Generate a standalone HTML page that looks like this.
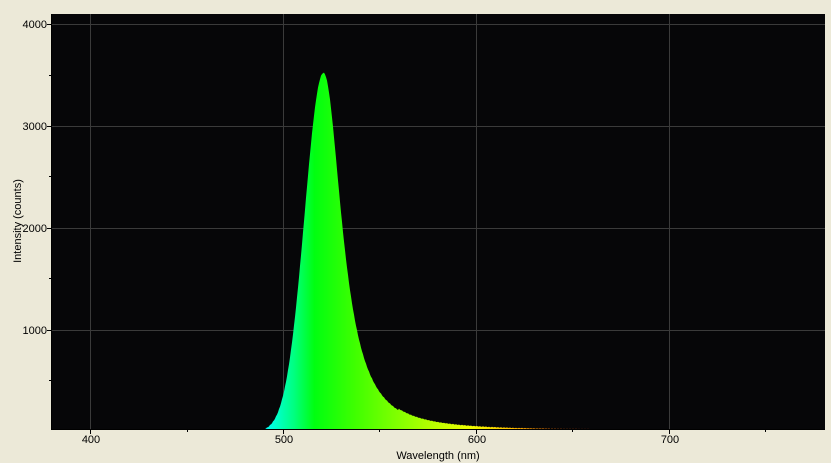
<!DOCTYPE html>
<html><head><style>
body{margin:0;width:831px;height:463px;background:#ece9d8;overflow:hidden;font-family:"Liberation Sans",sans-serif;}
svg{position:absolute;left:0;top:0}
text{font-family:"Liberation Sans",sans-serif;font-size:11px;fill:#000}
</style></head><body>
<svg width="831" height="463" id="s">
<defs>
<linearGradient id="g" gradientUnits="userSpaceOnUse" x1="186" x2="700" y1="0" y2="0">
<stop offset="0" stop-color="#0040ff"/>
<stop offset="0.10" stop-color="#00a0ff"/>
<stop offset="0.16" stop-color="#00ffee"/>
<stop offset="0.21" stop-color="#00ff80"/>
<stop offset="0.25" stop-color="#00ff10"/>
<stop offset="0.33" stop-color="#40ff00"/>
<stop offset="0.45" stop-color="#a0ff00"/>
<stop offset="0.55" stop-color="#eeff00"/>
<stop offset="0.62" stop-color="#ffcc00"/>
<stop offset="0.72" stop-color="#ff7000"/>
<stop offset="0.85" stop-color="#ff2000"/>
<stop offset="1" stop-color="#ff0000"/>
</linearGradient>
</defs>
<rect x="51" y="14" width="774" height="416" fill="#060608"/>
<g stroke="#3a3a3a" stroke-width="1">
<line x1="90.5" y1="14" x2="90.5" y2="430"/><line x1="283.5" y1="14" x2="283.5" y2="430"/>
<line x1="476.5" y1="14" x2="476.5" y2="430"/><line x1="669.5" y1="14" x2="669.5" y2="430"/>
<line x1="51" y1="24.5" x2="825" y2="24.5"/><line x1="51" y1="126.5" x2="825" y2="126.5"/>
<line x1="51" y1="228.5" x2="825" y2="228.5"/><line x1="51" y1="330.5" x2="825" y2="330.5"/>
</g>
<path id="c" fill="url(#g)"/>
<g stroke="#000" stroke-width="1">
<line x1="51" y1="429.5" x2="825" y2="429.5"/>
<line x1="51.5" y1="14" x2="51.5" y2="430"/>
<line x1="47" y1="24.5" x2="51" y2="24.5"/><line x1="47" y1="126.5" x2="51" y2="126.5"/>
<line x1="47" y1="228.5" x2="51" y2="228.5"/><line x1="47" y1="330.5" x2="51" y2="330.5"/>
<line x1="49" y1="75.5" x2="51" y2="75.5"/><line x1="49" y1="176.5" x2="51" y2="176.5"/>
<line x1="49" y1="278.5" x2="51" y2="278.5"/><line x1="49" y1="380.5" x2="51" y2="380.5"/>
<line x1="90.5" y1="430" x2="90.5" y2="434"/><line x1="283.5" y1="430" x2="283.5" y2="434"/>
<line x1="476.5" y1="430" x2="476.5" y2="434"/><line x1="669.5" y1="430" x2="669.5" y2="434"/>
<line x1="187.5" y1="430" x2="187.5" y2="432"/><line x1="379.5" y1="430" x2="379.5" y2="432"/>
<line x1="572.5" y1="430" x2="572.5" y2="432"/><line x1="765.5" y1="430" x2="765.5" y2="432"/>
</g>
<g text-anchor="end">
<text x="47" y="28">4000</text><text x="47" y="130">3000</text>
<text x="47" y="232">2000</text><text x="47" y="334">1000</text>
</g>
<g text-anchor="middle">
<text x="91" y="443">400</text><text x="284" y="443">500</text>
<text x="477" y="443">600</text><text x="670" y="443">700</text>
<text x="438" y="459">Wavelength (nm)</text>
<text transform="translate(21,221) rotate(-90)">Intensity (counts)</text>
</g>
</svg>
<script>
var d="M186,430";
for(var x=186;x<=700;x++){
 var w=400+(x-90)/1.93, v;
 if(w<521){v=3520*Math.exp(-Math.pow(w-521,2)/(2*9.8*9.8));}
 else{var t=(w-521)/12;v=3520/(1+t*t*(1+0.15*t));}
 if(w>560&&w<660) v+=15;
 v+=(x%3==0?5:0);
 var y=432-v*0.102; if(y>429)y=429;
 d+=" L"+x+","+y.toFixed(1);
}
d+=" L700,430 Z";
document.getElementById("c").setAttribute("d",d);
</script>
</body></html>
